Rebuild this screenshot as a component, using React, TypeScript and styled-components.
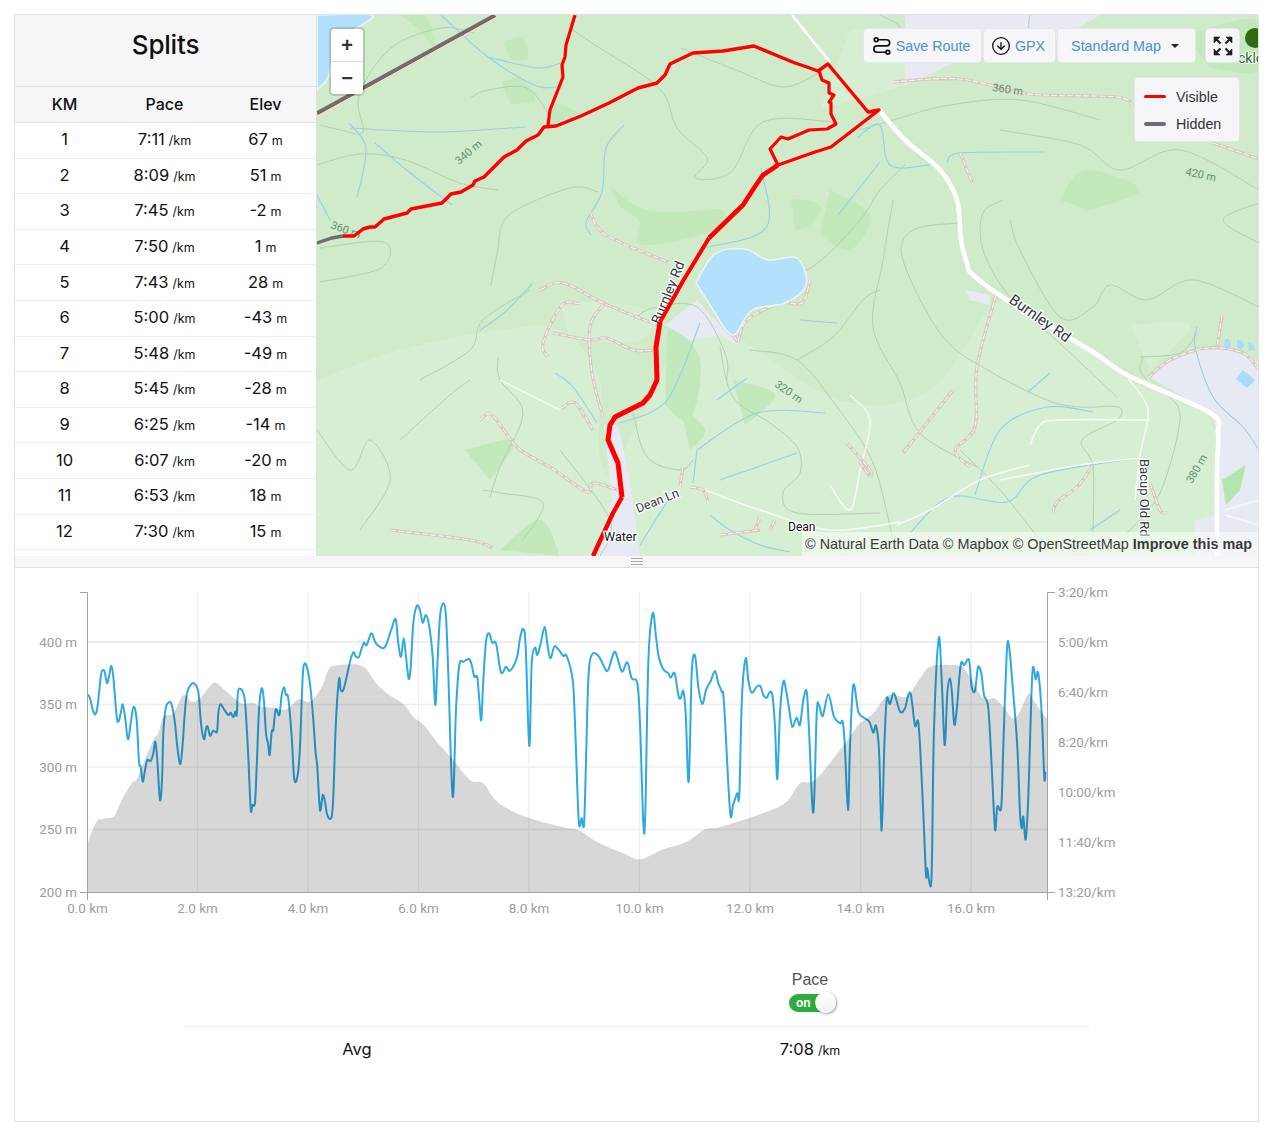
import React from "react";
import styled, { createGlobalStyle } from "styled-components";
import { CircleArrowDown } from "lucide-react";

const Global = createGlobalStyle`
  html, body { margin: 0; padding: 0; background: #fff; }
  body { font-family: "Liberation Sans", Arial, sans-serif; }
`;

const Page = styled.div`
  padding: 14px 13px 9px 14px;
`;
const Frame = styled.div`
  border: 1px solid #e0e0e8;
  height: 1106px;
  display: flex;
  flex-direction: column;
`;
const TopRow = styled.div`
  display: flex;
  height: 541px;
  flex: none;
`;
const Sidebar = styled.aside`
  width: 302px;
  flex: none;
  border-right: 1px solid #e0e0e8;
  box-sizing: border-box;
  overflow: hidden;
  font-family: Inter, "Noto Sans", sans-serif;
  color: #111;
`;
const SideTitle = styled.h2`
  margin: 0;
  height: 71px;
  box-sizing: content-box;
  background: #f6f6f9;
  border-bottom: 1px solid #e0e0e8;
  font-size: 26px;
  font-weight: 500;
  letter-spacing: -0.2px;
  line-height: 60px;
  text-align: center;
`;
const TableRow = styled.div<{ $head?: boolean }>`
  display: grid;
  grid-template-columns: 99px 101px 101px;
  height: ${(p) => (p.$head ? "35px" : "35.6px")};
  box-sizing: ${(p) => (p.$head ? "content-box" : "border-box")};
  align-items: center;
  text-align: center;
  padding-bottom: ${(p) => (p.$head ? "0" : "2px")};
  line-height: ${(p) => (p.$head ? "33px" : "normal")};
  background: ${(p) => (p.$head ? "#f6f6f9" : "#fff")};
  border-bottom: 1px solid ${(p) => (p.$head ? "#e0e0e8" : "#eeeef2")};
  font-size: ${(p) => (p.$head ? "16px" : "16.5px")};
  font-weight: ${(p) => (p.$head ? 500 : 400)};
`;
const Unit = styled.span`
  font-size: 12.5px;
  margin-left: 4px;
`;
const MapPane = styled.div`
  position: relative;
  flex: 1;
  overflow: hidden;
  min-width: 0;
`;
const MapArt = styled.svg`
  display: block;
  width: 941px;
  height: 541px;
`;
const ZoomBox = styled.div`
  position: absolute;
  left: 14px;
  top: 14px;
  width: 32px;
  background: #fff;
  border-radius: 3px;
  box-shadow: 0 0 0 2px rgba(0, 0, 0, 0.14);
`;
const ZoomKey = styled.div<{ $last?: boolean }>`
  height: 32px;
  display: flex;
  align-items: center;
  justify-content: center;
  border-bottom: ${(p) => (p.$last ? "none" : "1px solid #ddd")};
  font-size: 20px;
  font-weight: 700;
  color: #333;
  line-height: 1;
`;
const Toolbar = styled.div`
  position: absolute;
  top: 13px;
  right: 18px;
  display: flex;
  align-items: stretch;
`;
const ToolButton = styled.div<{ $w: number; $gapLeft?: number }>`
  width: ${(p) => p.$w}px;
  height: 35px;
  box-sizing: border-box;
  margin-left: ${(p) => p.$gapLeft ?? 1}px;
  padding-right: ${(p) => (p.$gapLeft ? 0 : 3)}px;
  background: #f6f6f9;
  border: 1px solid #e6e6ed;
  border-radius: 4px;
  display: flex;
  align-items: center;
  justify-content: center;
  gap: 4px;
  font-size: 14.3px;
  color: #4a90d2;
`;
const Caret = styled.span`
  width: 0;
  height: 0;
  margin-left: 6px;
  border-left: 4px solid transparent;
  border-right: 4px solid transparent;
  border-top: 4px solid #222;
`;
const Legend = styled.div`
  position: absolute;
  top: 62px;
  right: 18px;
  width: 106px;
  height: 65px;
  box-sizing: border-box;
  background: #f6f6f9;
  border: 1px solid #e6e6ed;
  border-radius: 4px;
  padding: 5px 9px;
  display: flex;
  flex-direction: column;
  font-size: 14.3px;
  color: #333;
`;
const LegendItem = styled.div`
  display: flex;
  align-items: center;
  flex: none;
  height: 27px;
  gap: 10px;
`;
const Swatch = styled.span<{ $c: string; $h: number }>`
  width: 22px;
  height: ${(p) => p.$h}px;
  border-radius: 2px;
  background: ${(p) => p.$c};
`;
const Attribution = styled.div`
  position: absolute;
  right: 0;
  bottom: 0;
  height: 24px;
  padding: 0 6px 0 3px;
  background: rgba(255, 255, 255, 0.5);
  font-size: 14.4px;
  line-height: 25px;
  color: #3a3a3a;
  white-space: nowrap;
  b { font-weight: 700; }
`;
const Handle = styled.div`
  height: 11px;
  flex: none;
  background: #f6f6f9;
  border-bottom: 1px solid #e0e0e8;
  box-sizing: content-box;
  display: flex;
  justify-content: center;
  align-items: center;
`;
const Grip = styled.div`
  width: 12px;
  height: 5px;
  border-top: 1px solid #aaa;
  border-bottom: 1px solid #aaa;
  position: relative;
  &::after {
    content: "";
    position: absolute;
    left: 0;
    right: 0;
    top: 2px;
    height: 1px;
    background: #aaa;
  }
`;
const ChartArt = styled.svg`
  display: block;
  width: 1243px;
  height: 356px;
  flex: none;
`;
const Stats = styled.div`
  width: 906px;
  margin: 0 0 0 169px;
  display: grid;
  grid-template-columns: 346px 560px;
`;
const Toggles = styled.div`
  grid-column: 2;
  height: 102px;
  box-sizing: border-box;
  padding-top: 47px;
  display: flex;
  flex-direction: column;
  align-items: center;
`;
const ToggleLabel = styled.div`
  font-size: 16px;
  line-height: 18px;
  color: #555;
`;
const Pill = styled.div`
  position: relative;
  width: 46px;
  height: 18px;
  margin: 5px 0 0 4px;
  border-radius: 9px;
  background: #2eaa3f;
  color: #fff;
  font-size: 12px;
  font-weight: 700;
  line-height: 18px;
  padding-left: 7px;
  box-sizing: border-box;
`;
const Knob = styled.span`
  position: absolute;
  right: -1px;
  top: -2px;
  width: 21px;
  height: 21px;
  border-radius: 50%;
  background: linear-gradient(180deg, #fff, #f2f2f2);
  box-shadow: 1px 1px 3px rgba(0, 0, 0, 0.4);
`;
const Rule = styled.div`
  grid-column: 1 / 3;
  height: 1px;
  background: #eeeef2;
`;
const StatCell = styled.div`
  font-family: Inter, "Noto Sans", sans-serif;
  color: #111;
  font-size: 16.5px;
  line-height: 44px;
  text-align: center;
`;

const rows: [number, string, string][] = [
  [1, "7:11", "67"], [2, "8:09", "51"], [3, "7:45", "-2"], [4, "7:50", "1"],
  [5, "7:43", "28"], [6, "5:00", "-43"], [7, "5:48", "-49"], [8, "5:45", "-28"],
  [9, "6:25", "-14"], [10, "6:07", "-20"], [11, "6:53", "18"], [12, "7:30", "15"], [13, "", ""],
];

/* ---------- drawing helpers ---------- */
const smooth = (p: number[]) => {
  let d = `M${p[0]} ${p[1]}`;
  const n = p.length / 2;
  const g = (i: number) => {
    const k = Math.max(0, Math.min(n - 1, i));
    return [p[k * 2], p[k * 2 + 1]];
  };
  for (let i = 0; i < n - 1; i++) {
    const [x0, y0] = g(i - 1);
    const [x1, y1] = g(i);
    const [x2, y2] = g(i + 1);
    const [x3, y3] = g(i + 2);
    d += `C${(x1 + (x2 - x0) / 6).toFixed(1)} ${(y1 + (y2 - y0) / 6).toFixed(1)} ${(x2 - (x3 - x1) / 6).toFixed(1)} ${(y2 - (y3 - y1) / 6).toFixed(1)} ${x2} ${y2}`;
  }
  return d;
};
const straight = (p: number[]) => {
  let d = `M${p[0]} ${p[1]}`;
  for (let i = 2; i < p.length; i += 2) d += `L${p[i]} ${p[i + 1]}`;
  return d;
};
const poly = (p: number[]) => straight(p) + "Z";

const conv = (a: number[], ox: number, oy: number) => {
  const out: number[] = [];
  for (let i = 0; i < a.length; i += 2) out.push(+(ox + a[i] / 3).toFixed(1), +(oy + a[i + 1] / 3).toFixed(1));
  return out;
};

/* ---------- chart data ---------- */
const pace = [
  ...conv([263,343,270,355,280,395,287,402,293,375,303,285,310,270,315,280,321,310,328,285,334,258,340,290,350,410,356,423,362,400,368,373,375,410,382,470,386,473,392,430,401,380,410,420,417,545,422,560,428,605,435,570,442,540,452,543,460,520,466,485,472,540,480,660,486,600,490,460,497,385,507,367,515,375,525,430,532,500,541,553,548,490,556,380,562,335,572,315,582,310,595,335,603,430,612,478,618,445,623,440,630,467,640,452,651,455,655,400,661,373,672,388,685,405,692,398,700,412,706,395,710,405,714,335,722,327,730,340,736,375,745,530,752,688,757,675,765,668,770,560,777,390,785,325,792,365,798,460,804,490,809,525,815,455,820,450,827,388,838,405,845,345,852,322,858,345,865,355,875,470,883,598,893,585,900,500,908,290,915,250,925,280,932,330,940,420,947,520,952,560,960,690,968,645,975,665,980,698,987,715,995,710,1000,650,1007,440,1017,298,1022,330,1030,330,1040,290,1050,245,1060,217,1068,230,1077,230,1085,205,1092,188,1100,195,1114,160,1125,185,1135,197,1150,205,1160,190,1175,145,1187,118,1195,190,1203,230,1211,175,1218,230,1226,296,1232,260,1240,130,1250,78,1260,90], 0, 580),
  ...conv([8,128,18,105,28,140,38,230,46,375,52,260,60,110,70,70,78,110,85,280,98,650,108,390,118,255,130,245,147,237,155,255,163,290,172,292,178,360,184,420,190,300,198,185,207,160,217,188,228,190,240,265,247,280,258,260,270,272,290,235,300,175,310,147,317,200,328,498,335,250,345,203,352,225,362,190,374,140,382,190,391,235,403,200,415,208,430,228,440,228,458,300,465,430,476,720,485,715,492,735,497,580,505,300,515,225,535,227,550,255,563,272,582,217,592,232,606,275,622,247,635,295,652,310,660,430,670,728,676,700,685,250,698,100,708,170,716,230,730,268,745,280,752,293,764,280,775,345,782,355,790,333,797,400,806,605,815,280,825,227,835,320,847,372,858,330,872,303,885,273,895,310,905,335,912,370,930,692,940,672,952,640,958,645,966,350,977,235,985,300,995,338,1012,318,1022,320,1030,345,1040,353,1048,338,1057,345,1065,440,1072,597,1080,400,1090,305,1098,330,1108,390,1117,440,1130,413,1140,435,1150,360,1160,335,1167,450,1180,698,1190,400,1197,375,1208,408,1225,343,1242,410,1260,430], 420, 580),
  ...conv([8,425,14,490,24,690,30,500,40,315,55,395,70,412,88,425,100,458,108,437,117,510,125,752,133,500,140,358,150,372,162,340,180,395,195,385,205,345,213,345,225,437,236,437,250,700,258,885,262,865,268,905,275,875,282,450,296,175,305,300,314,495,322,340,330,295,336,340,343,433,350,390,362,255,373,255,387,240,395,320,405,332,414,262,424,280,432,345,445,385,455,560,465,748,472,680,484,680,490,500,500,220,507,197,518,320,532,500,540,700,545,745,550,710,557,778,565,650,577,283,587,298,595,280,605,400,613,593,616,575], 840, 580),
];
const elev = [
  ...conv([263,790,275,755,292,722,305,718,320,715,340,712,350,695,365,660,395,610,410,597,440,525,460,480,475,460,490,410,520,400,545,350,560,348,575,365,600,355,630,318,648,308,680,335,725,370,760,368,780,380,820,383,850,390,870,380,897,357,925,367,945,352,968,315,985,270,1005,257,1085,257,1125,305,1160,340,1210,372,1240,410,1260,425], 0, 580),
  ...conv([20,445,50,485,95,535,150,600,190,610,232,665,310,708,430,742,475,750,530,785,610,820,660,838,730,808,800,785,855,748,905,740,1040,695,1100,665,1140,610,1185,600,1260,510], 420, 580),
  ...conv([30,470,60,430,100,400,145,345,200,350,240,295,275,258,360,257,380,275,430,355,463,355,490,380,525,415,565,342,580,360,615,410,622,412], 840, 580),
];

const hGrid = [642, 704.5, 767, 829.5];
const vGrid = [197.5, 308, 418.5, 529, 639.5, 750, 860.5, 971];
const xLabels = ["0.0 km", "2.0 km", "4.0 km", "6.0 km", "8.0 km", "10.0 km", "12.0 km", "14.0 km", "16.0 km"];
const xPos = [87.5, 197.5, 308, 418.5, 529, 639.5, 750, 860.5, 971];
const yLeft: [string, number][] = [["400 m", 642], ["350 m", 704], ["300 m", 767], ["250 m", 829], ["200 m", 892]];
const yRight: [string, number][] = [["3:20/km", 592], ["5:00/km", 642], ["6:40/km", 692], ["8:20/km", 742], ["10:00/km", 792], ["11:40/km", 842], ["13:20/km", 892]];
const axisFont = { fontFamily: "Roboto, sans-serif", fontSize: 13.4, fill: "#9c9c9c" };

const Chart = () => (
  <ChartArt viewBox="15 568 1243 356">
    {hGrid.map((y, i) => (
      <line key={y} x1={87} x2={1047} y1={y} y2={y} stroke="#eeeeee" strokeWidth={i === 0 ? 2 : 1.6} />
    ))}
    {vGrid.map((x) => (
      <line key={x} x1={x} x2={x} y1={592} y2={892} stroke="#efefef" strokeWidth={1.2} />
    ))}
    <path d={smooth(pace)} fill="none" stroke="#2ea9e2" strokeWidth={2} strokeLinejoin="round" />
    <path d={smooth(elev) + "L1047.3 892L87.7 892Z"} fill="#000" fillOpacity={0.155} />
    <path d="M80 592.5H87.5V900M80 892.5H1047.5M1055 592.5H1047.5V900M1055 892.5H1047.5" fill="none" stroke="#a3a3a3" strokeWidth={1} />
    {yLeft.map(([t, y]) => (
      <text key={t} x={77} y={y + 4.5} textAnchor="end" {...axisFont}>{t}</text>
    ))}
    {yRight.map(([t, y]) => (
      <text key={t} x={1058} y={y + 4.5} {...axisFont}>{t}</text>
    ))}
    {xLabels.map((t, i) => (
      <text key={t} x={xPos[i]} y={913} textAnchor="middle" {...axisFont}>{t}</text>
    ))}
  </ChartArt>
);

/* ---------- map data ---------- */
const lightAreas = [
  [317,380,400,350,500,330,560,330,600,380,600,460,640,556,317,556],
  [680,330,740,340,840,400,930,390,1000,300,1060,330,1130,380,1210,420,1215,556,640,556,620,470,650,400],
  [1010,330,1050,322,1095,370,1030,400],
  [1130,325,1190,325,1150,370],
  [820,110,940,70,905,30,850,30],
  [560,300,650,310,640,340,570,340],
  [480,470,560,460,590,520,500,540],
];
const darkAreas = [
  [611,188,641,208,677,212,723,210,709,232,641,245,640,222,620,207],
  [791,198,820,205,813,222,795,232],
  [502,82,520,78,535,100,510,104],
  [504,42,522,38,528,58,510,60],
  [552,102,577,113,550,125],
  [400,15,425,15,437,50,420,30],
  [668,318,700,360,690,420,665,405],
  [680,405,705,430,690,450],
  [1060,200,1085,170,1140,190,1090,210],
  [1185,35,1258,20,1258,70,1210,68],
  [465,450,515,440,490,480],
  [733,380,775,395,745,425],
  [830,190,870,215,850,250,820,235],
  [500,550,540,520,560,556],
];
const parks = [[1222,480,1246,465,1240,490,1226,505]];
const contours = [
  [320,125,341,130,363,132,359,95,391,48,441,28,474,33],
  [317,165,360,154,405,160,460,183,498,190],
  [470,98,488,90,527,88,549,115],
  [570,28,595,45,659,88,677,128,707,158,695,178,731,172,763,122,834,122],
  [681,48,741,72,784,87,820,72],
  [498,248,509,215,570,188,598,192],
  [320,248,384,242,381,268,320,282],
  [491,285,498,248],
  [893,200,883,260,873,327,900,383,920,433,977,467],
  [960,223,913,230,903,260,943,337,993,373,1047,400,1080,407,1118,407,1117,420,1082,440,1093,467,1093,533],
  [1003,200,983,213,983,250,1010,297,1067,350,1117,397],
  [1010,220,1020,250,1060,317,1093,307,1110,285,1147,300,1193,280,1259,307],
  [1259,203,1223,220,1259,243],
  [1140,357,1180,353,1197,333],
  [1143,357,1140,370,1147,380],
  [1170,397,1180,420,1160,493,1127,533],
  [498,358,500,380,523,413,500,467,490,497],
  [483,490,500,493,543,503,523,540],
  [720,347,733,397,770,423,797,447,800,473,783,493,797,513,880,513],
  [797,360,833,337,863,300,880,290],
  [750,350,797,360,837,407,873,463,893,540],
  [633,320,653,308,697,307,725,353,727,380],
  [633,413,647,457,680,470,693,460],
  [860,130,900,118,950,105,1020,100,1100,120],
  [890,40,1010,60,1030,15],
  [905,165,880,190,860,220,815,265,760,290],
  [400,440,450,395,470,380],
  [317,430,350,470,370,440,390,480,360,530],
  [420,380,470,350,483,320,530,290],
  [560,450,610,520,600,556],
  [960,450,1000,490,1040,540],
  [870,60,900,30,880,15],
  [1000,130,1080,145,1120,170,1180,150,1259,190],
];
const streams = [
  [349,123,366,148,357,198],
  [350,128,438,132,525,127],
  [375,143,409,172,452,205],
  [441,15,488,57,534,85,556,87],
  [488,57,538,68,563,62],
  [624,125,606,148,602,192,586,222,591,235],
  [761,168,766,228,702,248],
  [880,162,838,215],
  [947,163,960,153,1043,152],
  [858,137,880,125,890,165,930,165],
  [480,330,505,312,533,283],
  [555,373,573,387,597,423],
  [620,423,667,400,700,323],
  [717,400,747,378],
  [697,450,757,413,825,413],
  [693,483,697,450],
  [720,480,797,453],
  [800,320,837,323],
  [910,533,950,497,1007,502,1040,475,1137,458],
  [975,495,1000,430,1047,407,1093,412],
  [1028,392,1050,373],
  [1197,327,1195,347,1213,397,1243,427,1259,450],
  [710,515,730,530,760,545,790,552],
  [640,545,668,500],
  [317,195,330,220],
  [1120,510,1090,530],
];
const tracks = [
  [540,290,563,283,603,303,657,325],
  [580,304,562,305,543,343,548,357],
  [603,305,590,327,592,373,603,417],
  [553,333,590,340,607,338,633,350,655,350],
  [480,420,492,415,518,448,550,467,587,492,593,483,618,490],
  [562,408,575,403,593,430],
  [697,283,738,342],
  [738,342,747,320,780,303,802,303,810,280],
  [847,443,870,470,870,477],
  [683,467,680,487],
  [690,487,703,490,708,502],
  [760,518,755,530],
  [775,520,770,530],
  [996,295,977,367,975,427,955,450,970,467],
  [953,390,903,453],
  [860,462,870,477],
  [1053,513,1057,502,1077,487,1093,465],
  [1150,483,1160,510,1167,513],
  [1148,378,1170,360,1207,348,1243,353,1259,370],
  [1222,315,1217,348],
  [893,82,960,79,1030,94,1117,97,1133,107],
  [1213,143,1259,159],
  [960,153,972,182],
  [590,212,606,235,670,263],
  [390,530,470,540,493,548],
  [720,535,760,530],
];
const whites = [
  [500,380,560,410],
  [897,525,930,510,980,480,1030,465],
  [1030,445,1040,425,1060,420,1150,420],
  [1128,378,1148,410,1140,455,1135,500],
  [1259,500,1225,510],
  [1225,515,1259,525],
  [700,488,760,510,830,530,900,522],
  [830,485,850,510,860,470,870,420,850,395],
  [1000,480,1080,465,1140,458],
  [660,505,680,490],
];
const roadNorth = [792,15,812,40,830,62];
const road = [879,110,905,140,940,170,957,200,961,240,967,263,973,275,1010,302,1093,352,1127,375,1210,413,1218,433,1217,470,1217,556];
const routeMain = [343,236,354,236,363,229,370,227,375,227,384,219,407,213,411,209,442,203,451,194,461,192,473,185,475,181,484,177,504,157,517,150,526,141,538,135,544,127,556,126,581,116,609,103,638,88,657,83,665,75,670,64,693,53,723,51,754,46,795,63,807,67,818,71,828,64,868,112,879,110,831,147,815,152,778,165];
const routeLoop = [778,165,770,149,781,137,788,139,809,130,827,129,836,124,831,114,831,103,829,102,834,95,829,93,829,83,822,80,819,71];
const routeNorth = [575,15,566,45,565,57,562,65,563,77,550,110,548,125];

const contourStyle = { fontFamily: "Roboto, sans-serif", fontSize: 11, fill: "#5f8f73" };
const nameStyle = { fontFamily: "Roboto, sans-serif", fontSize: 12.5, fill: "#33383f", stroke: "#fff", strokeWidth: 2.5, paintOrder: "stroke" as const };

const MapDrawing = () => (
  <MapArt viewBox="317 15 941 541">
    <rect x={317} y={15} width={941} height={541} fill="#cfebc9" />
    {lightAreas.map((p, i) => <path key={i} d={smooth(p) + "Z"} fill="#d6eed2" />)}
    {darkAreas.map((p, i) => <path key={i} d={smooth(p) + "Z"} fill="#c2e8bc" />)}
    <path d={poly([905,15,1100,15,1040,50,960,60,905,85])} fill="#e8eaf3" />
    <path d={poly([1150,377,1167,363,1207,347,1243,352,1258,363,1258,556,1217,556,1218,433,1210,413])} fill="#e8eaf3" />
    <path d={poly([1195,520,1217,515,1217,556,1195,556])} fill="#e8eaf3" />
    <path d={poly([604,425,618,425,630,480,640,556,596,556,612,500])} fill="#e8eaf3" />
    <path d={poly([665,325,697,300,738,345,720,335,690,340])} fill="#e8eaf3" />
    <path d={poly([965,290,990,295,990,305,970,300])} fill="#e8eaf3" />
    {parks.map((p, i) => <path key={i} d={poly(p)} fill="#b3e6ae" />)}
    {contours.map((p, i) => <path key={i} d={smooth(p)} fill="none" stroke="#b4cfb4" strokeWidth={1} />)}
    {streams.map((p, i) => <path key={i} d={smooth(p)} fill="none" stroke="#95cff0" strokeWidth={1.1} />)}
    {whites.map((p, i) => <path key={i} d={smooth(p)} fill="none" stroke="#f7f8f6" strokeWidth={1.6} />)}
    {tracks.map((p, i) => (
      <g key={i}>
        <path d={smooth(p)} fill="none" stroke="#d9c8c2" strokeWidth={3.2} />
        <path d={smooth(p)} fill="none" stroke="#f7f3ef" strokeWidth={1.1} strokeDasharray="6 2" />
      </g>
    ))}
    <path d={smooth([317,15,372,15,352,32,335,52,328,78,317,90]) + "L317 15Z"} fill="#b3e0fc" stroke="#e8f3ee" strokeWidth={2} />
    <path d={smooth([696,283,715,254,745,249,768,260,797,258,806,285,785,303,752,310,733,335,713,310]) + "Z"} fill="#b3e0fc" stroke="#eef3f3" strokeWidth={1.5} />
    <path d={smooth(roadNorth)} fill="none" stroke="#fff" strokeWidth={2.6} />
    <path d={smooth(road)} fill="none" stroke="#fff" strokeWidth={4.6} />
    <path d="M1225 340q4-4 6 4l-2 5-5-2zM1237 340q5-2 7 5l-3 5-4-3zM1248 342q5 0 7 8l-6 1zM1243 370l12 10-8 8-11-9z" fill="#a8dcfb" />
    <circle cx={1255} cy={38} r={10} fill="#2f6a14" />
    <text x={1238} y={63} fontFamily="Roboto, sans-serif" fontSize={14} fill="#2a6b26" stroke="#fff" strokeWidth={2} paintOrder="stroke">ckle</text>

    <text {...contourStyle} transform="translate(459 165) rotate(-40)">340 m</text>
    <text {...contourStyle} transform="translate(330 228) rotate(20)">360 m</text>
    <text {...contourStyle} transform="translate(992 91) rotate(8)">360 m</text>
    <text {...contourStyle} transform="translate(1185 175) rotate(12)">420 m</text>
    <text {...contourStyle} transform="translate(774 386) rotate(35)">320 m</text>
    <text {...contourStyle} transform="translate(1192 484) rotate(-60)">380 m</text>
    <text {...nameStyle} fontSize={15} transform="translate(1008 302) rotate(35)">Burnley Rd</text>
    <text {...nameStyle} fontSize={14} transform="translate(660 325) rotate(-68)">Burnley Rd</text>
    <text {...nameStyle} transform="translate(638 513) rotate(-22)">Dean Ln</text>
    <text {...nameStyle} fontSize={13} transform="translate(1140 459) rotate(90)">Bacup Old Rd</text>
    <text {...nameStyle} x={788} y={531} fontSize={12} fill="#111">Dean</text>

    <path d={straight([317,113,495,15])} fill="none" stroke="#ff0000" strokeWidth={1} transform="translate(0.8 1.4)" />
    <path d={straight([317,113,495,15])} fill="none" stroke="#6d6d72" strokeWidth={3.4} />
    <path d={straight([317,243,332,238,343,236])} fill="none" stroke="#6d6d72" strokeWidth={3.4} strokeLinecap="round" />
    <path d={straight(routeMain)} fill="none" stroke="#ff0000" strokeWidth={3.4} strokeLinejoin="round" />
    <path d={straight(routeLoop)} fill="none" stroke="#ff0000" strokeWidth={3.2} strokeLinejoin="round" />
    <path d={straight(routeNorth)} fill="none" stroke="#ff0000" strokeWidth={3.2} />
    <path d={straight([778,165,763,175,754,188,743,205,709,238])} fill="none" stroke="#ff0000" strokeWidth={4.6} />
    <path d={straight([709,238,683,281,660,322])} fill="none" stroke="#ff0000" strokeWidth={4} />
    <path d={straight([660,322,656,347,657,380,650,395,643,403,623,413,615,417,610,425,608,440,618,463,622,497])} fill="none" stroke="#ff0000" strokeWidth={5} strokeLinejoin="round" />
    <path d={straight([622,497,613,513,593,556])} fill="none" stroke="#ff0000" strokeWidth={4.4} strokeLinejoin="round" />
    <text {...nameStyle} x={604} y={541} fontSize={12.5} fill="#111">Water</text>
  </MapArt>
);

const RouteIcon = () => (
  <svg width="20" height="20" viewBox="0 0 24 24" fill="none" stroke="#111" strokeWidth="2">
    <circle cx="5" cy="4.5" r="2.3" />
    <path d="M7.5 4.5h10a3.7 3.7 0 0 1 0 7.4H6a3.8 3.8 0 0 0 0 7.6h10.5" />
    <circle cx="19" cy="19.5" r="2.3" />
  </svg>
);
const ExpandIcon = () => (
  <svg width="20" height="20" viewBox="0 0 20 20" fill="#222" stroke="#222">
    <path d="M1 1h6l-6 6zM19 1h-6l6 6zM1 19h6l-6-6zM19 19h-6l6-6z" strokeWidth="0.6" />
    <path d="M3.5 3.5l4 4M16.500 3.500l-4 4M3.500 16.500l4-4M16.500 16.500l-4-4" strokeWidth="2.2" />
  </svg>
);

export default function App() {
  return (
    <Page>
      <Global />
      <Frame>
        <TopRow>
          <Sidebar>
            <SideTitle>Splits</SideTitle>
            <TableRow $head>
              <span>KM</span>
              <span>Pace</span>
              <span>Elev</span>
            </TableRow>
            {rows.map(([km, pc, el]) => (
              <TableRow key={km}>
                {pc ? (
                  <>
                    <span>{km}</span>
                    <span>{pc}<Unit>/km</Unit></span>
                    <span>{el}<Unit>m</Unit></span>
                  </>
                ) : null}
              </TableRow>
            ))}
          </Sidebar>
          <MapPane>
            <MapDrawing />
            <ZoomBox>
              <ZoomKey>+</ZoomKey>
              <ZoomKey $last>−</ZoomKey>
            </ZoomBox>
            <Toolbar>
              <ToolButton $w={119}>
                <RouteIcon />
                Save Route
              </ToolButton>
              <ToolButton $w={73}>
                <CircleArrowDown size={20} color="#111" strokeWidth={1.6} />
                GPX
              </ToolButton>
              <ToolButton $w={139}>
                Standard Map
                <Caret />
              </ToolButton>
              <ToolButton $w={35} $gapLeft={9}>
                <ExpandIcon />
              </ToolButton>
            </Toolbar>
            <Legend>
              <LegendItem>
                <Swatch $c="#ff0000" $h={3} />
                Visible
              </LegendItem>
              <LegendItem>
                <Swatch $c="#6d6d78" $h={4} />
                Hidden
              </LegendItem>
            </Legend>
            <Attribution>
              © Natural Earth Data © Mapbox © OpenStreetMap <b>Improve this map</b>
            </Attribution>
          </MapPane>
        </TopRow>
        <Handle>
          <Grip />
        </Handle>
        <Chart />
        <Stats>
          <Toggles>
            <ToggleLabel>Pace</ToggleLabel>
            <Pill>
              on
              <Knob />
            </Pill>
          </Toggles>
          <Rule />
          <StatCell>Avg</StatCell>
          <StatCell>7:08<Unit>/km</Unit></StatCell>
        </Stats>
      </Frame>
    </Page>
  );
}
